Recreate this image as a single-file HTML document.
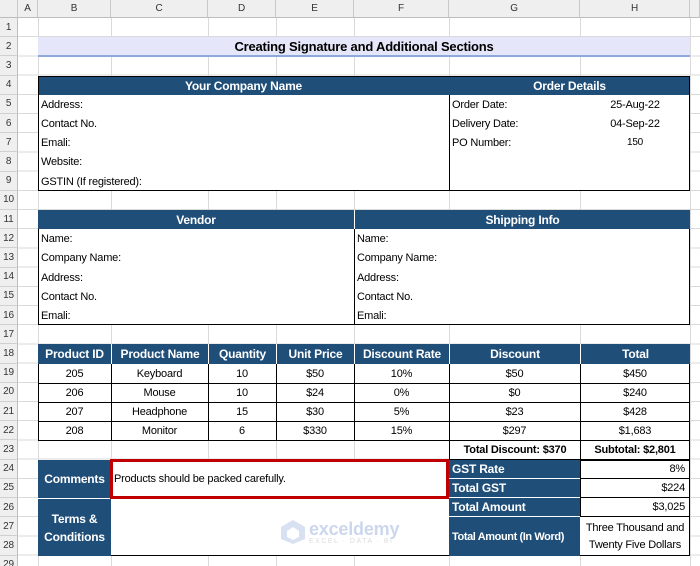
<!DOCTYPE html>
<html><head><meta charset="utf-8"><style>
*{margin:0;padding:0;box-sizing:border-box}
html,body{width:700px;height:566px;overflow:hidden}
body{background:#fff;font-family:"Liberation Sans",Arial,sans-serif;font-size:11px;color:#000;position:relative;letter-spacing:-0.2px}
.grid{position:absolute;left:18px;top:18px;width:682px;height:548px;background-image:repeating-linear-gradient(to bottom,transparent 0,transparent 18.2px,#dadada 18.2px,#dadada 19.2px)}
.vl{position:absolute;top:0;width:1px;height:566px;background:#dadada}
.ch{position:absolute;top:0;height:18px;background:#efefef;border-right:1px solid #c8c8c8;border-bottom:1px solid #bdbdbd;font-size:10px;color:#333;display:flex;align-items:center;justify-content:center}
.rh{position:absolute;left:0;width:18px;height:19.2px;background:#efefef;border-bottom:1px solid #d0d0d0;border-right:1px solid #bdbdbd;font-size:10px;color:#333;display:flex;align-items:center;justify-content:center}
.c{position:absolute;display:flex;align-items:center;padding-left:2px;white-space:nowrap}
.h{background:#1f4e79;color:#fff;font-weight:bold;font-size:12px;justify-content:center;padding:0}
.ctr{justify-content:center;padding:0}
.r{justify-content:flex-end;padding-right:4px}
.b{font-weight:bold}
.box{position:absolute;border:1px solid #000}
</style></head><body>
<div class="grid"></div>
<div class="vl" style="left:38px"></div><div class="vl" style="left:111px"></div><div class="vl" style="left:208px"></div><div class="vl" style="left:276px"></div><div class="vl" style="left:354px"></div><div class="vl" style="left:449px"></div><div class="vl" style="left:580px"></div><div class="vl" style="left:690px"></div>
<div class="ch" style="left:0;width:18px"></div>
<div class="ch" style="left:18px;width:20px">A</div><div class="ch" style="left:38px;width:73px">B</div><div class="ch" style="left:111px;width:97px">C</div><div class="ch" style="left:208px;width:68px">D</div><div class="ch" style="left:276px;width:78px">E</div><div class="ch" style="left:354px;width:95px">F</div><div class="ch" style="left:449px;width:131px">G</div><div class="ch" style="left:580px;width:110px">H</div><div class="ch" style="left:690px;width:10px"></div>
<div class="rh" style="top:18px">1</div><div class="rh" style="top:37.2px">2</div><div class="rh" style="top:56.4px">3</div><div class="rh" style="top:75.6px">4</div><div class="rh" style="top:94.8px">5</div><div class="rh" style="top:114px">6</div><div class="rh" style="top:133.2px">7</div><div class="rh" style="top:152.4px">8</div><div class="rh" style="top:171.6px">9</div><div class="rh" style="top:190.8px">10</div><div class="rh" style="top:210px">11</div><div class="rh" style="top:229.2px">12</div><div class="rh" style="top:248.4px">13</div><div class="rh" style="top:267.6px">14</div><div class="rh" style="top:286.8px">15</div><div class="rh" style="top:306px">16</div><div class="rh" style="top:325.2px">17</div><div class="rh" style="top:344.4px">18</div><div class="rh" style="top:363.6px">19</div><div class="rh" style="top:382.8px">20</div><div class="rh" style="top:402px">21</div><div class="rh" style="top:421.2px">22</div><div class="rh" style="top:440.4px">23</div><div class="rh" style="top:459.6px">24</div><div class="rh" style="top:478.8px">25</div><div class="rh" style="top:498px">26</div><div class="rh" style="top:517.2px">27</div><div class="rh" style="top:536.4px">28</div><div class="rh" style="top:555.6px">29</div>

<div class="c ctr b" style="left:38px;top:37px;width:652px;height:20px;background:#e6e6fa;border-bottom:2px solid #8ea9db;font-size:13px">Creating Signature and Additional Sections</div>

<div class="c h" style="left:38px;top:76px;width:411px;height:19px">Your Company Name</div>
<div class="c h" style="left:449px;top:76px;width:241px;height:19px">Order Details</div>
<div class="box" style="left:38px;top:76px;width:652px;height:115px;background:transparent"></div>
<div style="position:absolute;left:38px;top:95px;width:652px;height:96px;background:#fff;border:1px solid #000;border-top:none"></div>
<div style="position:absolute;left:449px;top:95px;width:1px;height:96px;background:#000"></div>
<div class="c" style="left:39px;top:95px;height:19px">Address:</div>
<div class="c" style="left:39px;top:114px;height:19px">Contact No.</div>
<div class="c" style="left:39px;top:133px;height:19px">Emali:</div>
<div class="c" style="left:39px;top:152px;height:20px">Website:</div>
<div class="c" style="left:39px;top:172px;height:19px">GSTIN (If registered):</div>
<div class="c" style="left:450px;top:95px;height:19px">Order Date:</div>
<div class="c" style="left:450px;top:114px;height:19px">Delivery Date:</div>
<div class="c" style="left:450px;top:133px;height:19px">PO Number:</div>
<div class="c ctr" style="left:580px;top:95px;width:110px;height:19px">25-Aug-22</div>
<div class="c ctr" style="left:580px;top:114px;width:110px;height:19px">04-Sep-22</div>
<div class="c ctr" style="left:580px;top:133px;width:110px;height:19px;font-size:10px">150</div>

<div class="c h" style="left:38px;top:210px;width:316px;height:19px">Vendor</div>
<div class="c h" style="left:354px;top:210px;width:336px;height:19px;border-left:1px solid #fff">Shipping Info</div>
<div style="position:absolute;left:38px;top:229px;width:652px;height:96px;background:#fff;border:1px solid #000;border-top:none"></div>
<div style="position:absolute;left:354px;top:229px;width:1px;height:96px;background:#000"></div>
<div class="c" style="left:39px;top:229px;height:19px">Name:</div>
<div class="c" style="left:39px;top:248px;height:20px">Company Name:</div>
<div class="c" style="left:39px;top:268px;height:19px">Address:</div>
<div class="c" style="left:39px;top:287px;height:19px">Contact No.</div>
<div class="c" style="left:39px;top:306px;height:19px">Emali:</div>
<div class="c" style="left:355px;top:229px;height:19px">Name:</div>
<div class="c" style="left:355px;top:248px;height:20px">Company Name:</div>
<div class="c" style="left:355px;top:268px;height:19px">Address:</div>
<div class="c" style="left:355px;top:287px;height:19px">Contact No.</div>
<div class="c" style="left:355px;top:306px;height:19px">Emali:</div>

<div style="position:absolute;left:38px;top:344px;width:652px;height:97px;background:#fff;border:1px solid #000"></div>
<div class="c h" style="left:38px;top:344px;width:73px;height:20px">Product ID</div>
<div class="c h" style="left:111px;top:344px;width:97px;height:20px;border-left:1px solid #fff">Product Name</div>
<div class="c h" style="left:208px;top:344px;width:68px;height:20px;border-left:1px solid #fff">Quantity</div>
<div class="c h" style="left:276px;top:344px;width:78px;height:20px;border-left:1px solid #fff">Unit Price</div>
<div class="c h" style="left:354px;top:344px;width:95px;height:20px;border-left:1px solid #fff">Discount Rate</div>
<div class="c h" style="left:449px;top:344px;width:131px;height:20px;border-left:1px solid #fff">Discount</div>
<div class="c h" style="left:580px;top:344px;width:110px;height:20px;border-left:1px solid #fff">Total</div>
<div style="position:absolute;left:38px;top:383px;width:652px;height:1px;background:#000"></div>
<div style="position:absolute;left:38px;top:402px;width:652px;height:1px;background:#000"></div>
<div style="position:absolute;left:38px;top:421px;width:652px;height:1px;background:#000"></div>
<div style="position:absolute;left:111px;top:364px;width:1px;height:77px;background:#000"></div>
<div style="position:absolute;left:208px;top:364px;width:1px;height:77px;background:#000"></div>
<div style="position:absolute;left:276px;top:364px;width:1px;height:77px;background:#000"></div>
<div style="position:absolute;left:354px;top:364px;width:1px;height:77px;background:#000"></div>
<div style="position:absolute;left:449px;top:364px;width:1px;height:77px;background:#000"></div>
<div style="position:absolute;left:580px;top:364px;width:1px;height:77px;background:#000"></div>

<div class="c ctr" style="left:38px;top:364px;width:73px;height:19px">205</div><div class="c ctr" style="left:111px;top:364px;width:97px;height:19px">Keyboard</div><div class="c ctr" style="left:208px;top:364px;width:68px;height:19px">10</div><div class="c ctr" style="left:276px;top:364px;width:78px;height:19px">$50</div><div class="c ctr" style="left:354px;top:364px;width:95px;height:19px">10%</div><div class="c ctr" style="left:449px;top:364px;width:131px;height:19px">$50</div><div class="c ctr" style="left:580px;top:364px;width:110px;height:19px">$450</div>
<div class="c ctr" style="left:38px;top:383px;width:73px;height:19px">206</div><div class="c ctr" style="left:111px;top:383px;width:97px;height:19px">Mouse</div><div class="c ctr" style="left:208px;top:383px;width:68px;height:19px">10</div><div class="c ctr" style="left:276px;top:383px;width:78px;height:19px">$24</div><div class="c ctr" style="left:354px;top:383px;width:95px;height:19px">0%</div><div class="c ctr" style="left:449px;top:383px;width:131px;height:19px">$0</div><div class="c ctr" style="left:580px;top:383px;width:110px;height:19px">$240</div>
<div class="c ctr" style="left:38px;top:402px;width:73px;height:19px">207</div><div class="c ctr" style="left:111px;top:402px;width:97px;height:19px">Headphone</div><div class="c ctr" style="left:208px;top:402px;width:68px;height:19px">15</div><div class="c ctr" style="left:276px;top:402px;width:78px;height:19px">$30</div><div class="c ctr" style="left:354px;top:402px;width:95px;height:19px">5%</div><div class="c ctr" style="left:449px;top:402px;width:131px;height:19px">$23</div><div class="c ctr" style="left:580px;top:402px;width:110px;height:19px">$428</div>
<div class="c ctr" style="left:38px;top:421px;width:73px;height:20px">208</div><div class="c ctr" style="left:111px;top:421px;width:97px;height:20px">Monitor</div><div class="c ctr" style="left:208px;top:421px;width:68px;height:20px">6</div><div class="c ctr" style="left:276px;top:421px;width:78px;height:20px">$330</div><div class="c ctr" style="left:354px;top:421px;width:95px;height:20px">15%</div><div class="c ctr" style="left:449px;top:421px;width:131px;height:20px">$297</div><div class="c ctr" style="left:580px;top:421px;width:110px;height:20px">$1,683</div>

<div class="c ctr b" style="left:449px;top:440px;width:132px;height:20px;background:#fff;border:1px solid #000">Total Discount: $370</div>
<div class="c ctr b" style="left:580px;top:440px;width:110px;height:20px;background:#fff;border:1px solid #000">Subtotal: $2,801</div>

<div style="position:absolute;left:38px;top:460px;width:652px;height:96px;background:#fff;border:1px solid #000"></div>
<div class="c h" style="left:38px;top:460px;width:73px;height:38px;font-size:12px">Comments</div>
<div class="c h" style="left:38px;top:498px;width:73px;height:58px;border-top:1px solid #fff;white-space:normal;text-align:center;line-height:18px">Terms &amp;<br>Conditions</div>
<div style="position:absolute;left:111px;top:498px;width:338px;height:1px;background:#000"></div>
<div class="c" style="left:112px;top:460px;height:38px;padding-left:2px">Products should be packed carefully.</div>
<div style="position:absolute;left:110px;top:459px;width:339px;height:40px;border:3px solid #c00000"></div>

<div class="c h" style="left:449px;top:460px;width:131px;height:19px;justify-content:flex-start;padding-left:3px;border-bottom:1px solid #fff">GST Rate</div>
<div class="c h" style="left:449px;top:479px;width:131px;height:19px;justify-content:flex-start;padding-left:3px;border-bottom:1px solid #fff">Total GST</div>
<div class="c h" style="left:449px;top:498px;width:131px;height:19px;justify-content:flex-start;padding-left:3px;border-bottom:1px solid #fff">Total Amount</div>
<div class="c h" style="left:449px;top:517px;width:131px;height:39px;justify-content:flex-start;padding-left:3px;font-size:11px;letter-spacing:-0.4px">Total Amount (In Word)</div>
<div class="c r" style="left:580px;top:460px;width:110px;height:19px;border:1px solid #000;border-top:none">8%</div>
<div class="c r" style="left:580px;top:479px;width:110px;height:19px;border:1px solid #000;border-top:none">$224</div>
<div class="c r" style="left:580px;top:498px;width:110px;height:19px;border:1px solid #000;border-top:none">$3,025</div>
<div class="c ctr" style="left:580px;top:517px;width:110px;height:39px;white-space:normal;text-align:center;line-height:17px">Three Thousand and Twenty Five Dollars</div>

<div style="position:absolute;left:280px;top:519px;display:flex;align-items:center;opacity:.35">
<svg width="26" height="26" viewBox="0 0 26 26"><polygon points="13,1 25,8 25,20 13,25 1,20 1,8" fill="#8faadc"/><polygon points="13,8 19,12 19,18 13,21 7,18 7,12" fill="#fff"/></svg>
<div style="margin-left:3px;line-height:1"><div style="font-size:18px;font-weight:bold;color:#6f8fd0">exceldemy</div><div style="font-size:7px;color:#999;letter-spacing:1.5px">EXCEL · DATA · BI</div></div>
</div>
</body></html>
